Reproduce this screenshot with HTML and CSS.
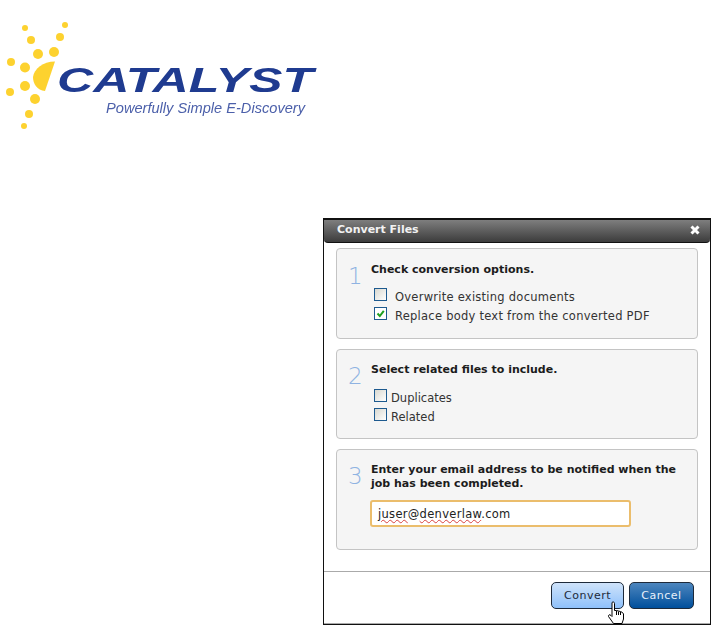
FILE: index.html
```html
<!DOCTYPE html>
<html lang="en">
<head>
<meta charset="utf-8">
<title>Convert Files</title>
<link rel="stylesheet" href="styles.css">
</head>
<body>
<header class="logo">
  <svg width="330" height="140" viewBox="0 0 330 140" class="logo-svg">
    <g fill="#fdd22f">
      <circle cx="25" cy="28" r="3"/><circle cx="31" cy="40" r="4"/><circle cx="38" cy="54" r="5"/>
      <circle cx="54" cy="52" r="5"/><circle cx="60" cy="37" r="4"/><circle cx="65" cy="25" r="3"/>
      <circle cx="11" cy="62" r="4"/><circle cx="25" cy="67.500" r="5"/><circle cx="25" cy="86" r="5"/>
      <circle cx="10" cy="92" r="4"/><circle cx="35" cy="99" r="5"/><circle cx="29" cy="114" r="4"/>
      <circle cx="24" cy="126" r="3"/>
      <path d="M55 61.500 L45 91 C37 90 33 84 33 77 C34 69 43 61.500 55 61.500Z"/>
    </g>
    <text x="57" y="91.500" class="logo-name" textLength="256" lengthAdjust="spacingAndGlyphs">CATALYST</text>
    <text x="106" y="113" class="logo-tag" textLength="199" lengthAdjust="spacingAndGlyphs">Powerfully Simple E-Discovery</text>
  </svg>
</header>
<section class="dialog">
  <div class="titlebar">
    <h1 class="title">Convert Files</h1>
    <svg class="close" width="10" height="10" viewBox="0 0 10 10"><path d="M1.500 1.500L8.500 8.500M8.500 1.500L1.500 8.500" stroke="#fff" stroke-width="3"/></svg>
  </div>
  <div class="body">
    <div class="step step-1">
      <div class="num">1</div>
      <div class="step-main">
        <p class="head">Check conversion options.</p>
        <label class="opt wide"><span class="box"></span>Overwrite existing documents</label>
        <label class="opt wide"><span class="box checked"><svg width="11" height="11" viewBox="0 0 11 11"><path d="M2.500 5.500L4.800 8L8.800 2.800" fill="none" stroke="#1fa01f" stroke-width="2"/></svg></span>Replace body text from the converted PDF</label>
      </div>
    </div>
    <div class="step step-2">
      <div class="num">2</div>
      <div class="step-main">
        <p class="head">Select related files to include.</p>
        <label class="opt"><span class="box"></span>Duplicates</label>
        <label class="opt"><span class="box"></span>Related</label>
      </div>
    </div>
    <div class="step step-3">
      <div class="num">3</div>
      <div class="step-main">
        <p class="head">Enter your email address to be notified when the job has been completed.</p>
        <div class="email"><span class="squiggle">juser</span>@<span class="squiggle">denverlaw</span>.com</div>
      </div>
    </div>
  </div>
  <div class="footer">
    <button class="btn btn-light">Convert</button>
    <button class="btn btn-dark">Cancel</button>
    <svg class="cursor" width="18" height="24" viewBox="0 0 18 24"><path d="M5 1.500C6 .5 7.500 1 7.500 2.500V9.500L9.500 9.500L11.500 10L13.500 10.500L15.500 11.500L16.500 13V18L15 22.500H6.500L1.500 15.500C1 14 2.500 13 4 14.500L5 15.500Z" fill="#fff" stroke="#000"/><path d="M9.500 10V14M11.500 10.500V14M13.500 11V14" stroke="#000"/></svg>
  </div>
</section>
</body>
</html>
```
FILE: styles.css
```css
* { box-sizing: border-box; }
html, body { margin: 0; padding: 0; background: #fff; }
body { font-family: "DejaVu Sans", Verdana, sans-serif; font-size: 11px; color: #222; overflow: hidden; height: 625px; }
.logo { height: 218px; }
.logo-svg { display: block; filter: blur(0.7px); }
.logo-name { font-family: "Liberation Sans", sans-serif; font-weight: 700; font-style: italic; font-size: 35px; fill: #1f3b90; }
.logo-tag { font-family: "Liberation Sans", sans-serif; font-style: italic; font-size: 14px; fill: #4c60aa; }
.dialog { margin-left: 323px; width: 388px; height: 407px; border: 1px solid #111; border-top-width: 2px; background: #fff; display: flex; flex-direction: column; }
.titlebar { height: 23px; background: linear-gradient(#7e7e7e, #3c3c3c); border-bottom: 1px solid #111; border-radius: 0 0 4px 4px; display: flex; align-items: center; justify-content: space-between; padding: 0 10px 4px 13px; }
.title { margin: 0; font-size: 11px; font-weight: 700; color: #f2f2f2; font-family: "DejaVu Sans", sans-serif; }
.close { display: block; margin-top: 2px; }
.body { flex: 1; padding: 5px 12px 0 12px; display: flex; flex-direction: column; gap: 10px; }
.step { background: #f5f5f5; border: 1px solid #c4c4c4; border-radius: 4px; display: flex; padding-left: 11px; }
.step-1 { height: 91px; padding-top: 14px; }
.step-2 { height: 90px; padding-top: 13px; }
.step-3 { height: 101px; padding-top: 13px; }
.num { width: 23px; flex: none; font-size: 23px; line-height: 26px; color: #8fb3e2; font-weight: 200; }
.step-main { flex: 1; }
.head { margin: 0 0 11px; font-size: 11px; line-height: 14px; font-weight: 700; color: #1c1c1c; width: 320px; }
.step-1 .head { margin-bottom: 10px; }
.opt { display: flex; align-items: center; height: 19px; color: #333; font-size: 11.500px; }
.opt.wide { letter-spacing: .25px; }
.box { width: 13px; height: 13px; flex: none; margin: -4px 4px 0 3px; border: 1px solid #1d5a8f; background: linear-gradient(135deg, #d8d8d0, #fff); display: flex; }
.wide .box { margin-right: 8px; }
.box.checked { background: #fff; }
.box svg { display: block; }
.email { width: 261px; height: 27px; margin: -1px 0 0 -1px; border: 2px solid #ebbd6c; border-radius: 3px; background: #fff; padding: 1px 0 0 6px; line-height: 23px; font-size: 11.500px; color: #222; letter-spacing: .3px; }
.step-3 .head { margin-bottom: 10px; }
.squiggle { text-decoration: underline wavy #d9413f 1px; text-underline-offset: 1px; }
.footer { position: relative; height: 53px; border-top: 1px solid #aaa; border-bottom: 1px solid #aaa; display: flex; justify-content: flex-end; align-items: flex-start; gap: 5px; padding: 10px 16px 0 0; margin-top: 21px; }
.btn { font-family: "DejaVu Sans", sans-serif; font-size: 11px; height: 27px; border: 1px solid #1e2a3a; border-radius: 5px; padding: 0; letter-spacing: .5px; }
.btn-light { width: 73px; background: linear-gradient(#cfe3fa, #8fc1fb); color: #1d2a3a; }
.btn-dark { width: 65px; background: linear-gradient(#4d86be, #004f9c); color: #e8f0fa; }
.cursor { position: absolute; left: 283px; top: 29px; }
```
